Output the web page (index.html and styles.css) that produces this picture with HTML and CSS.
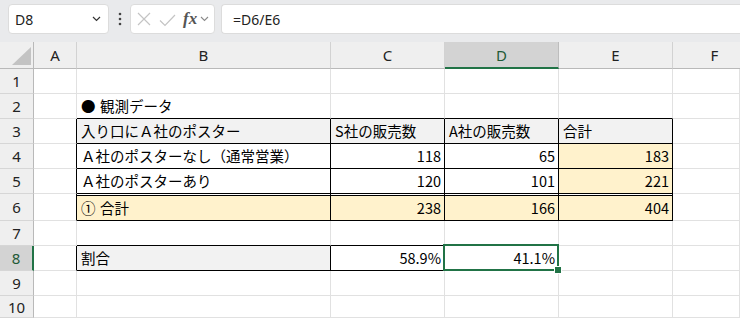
FILE: index.html
```html
<!DOCTYPE html>
<html lang="ja">
<head>
<meta charset="utf-8">
<link rel="stylesheet" href="styles.css">
</head>
<body>
<div class="toolbar">
  <div class="namebox">
    <span class="nb-text">D8</span>
    <svg class="chev" width="9" height="6" viewBox="0 0 9 6"><polyline points="1,1 4.5,4.5 8,1" fill="none" stroke="#333" stroke-width="1.2"/></svg>
  </div>
  <div class="dots">
    <svg width="4" height="14" viewBox="0 0 4 14"><circle cx="2" cy="2" r="1.3" fill="#444"/><circle cx="2" cy="7" r="1.3" fill="#444"/><circle cx="2" cy="12" r="1.3" fill="#444"/></svg>
  </div>
  <div class="fxbox">
    <svg class="ic-x" width="14" height="14" viewBox="0 0 14 14"><path d="M1 1 L13 13 M13 1 L1 13" stroke="#c4c4c4" stroke-width="1.2" fill="none"/></svg>
    <svg class="ic-ok" width="17" height="13" viewBox="0 0 17 13"><polyline points="1,6.5 6,11.5 16,1" fill="none" stroke="#c4c4c4" stroke-width="1.2"/></svg>
    <span class="fx">fx</span>
    <svg class="chev2" width="9" height="6" viewBox="0 0 9 6"><polyline points="1,1 4.5,4.5 8,1" fill="none" stroke="#8a8a8a" stroke-width="1.1"/></svg>
  </div>
  <div class="formula">=D6/E6</div>
</div>

<div class="sheet">
  <!-- column header -->
  <div class="corner"><svg width="19" height="18" viewBox="0 0 19 18"><polygon points="19,0 19,18 0,18" fill="#c3c3c3"/></svg></div>
  <div class="ch">A</div><div class="ch">B</div><div class="ch">C</div><div class="ch ch-sel">D</div><div class="ch">E</div><div class="ch ch-last">F</div>

  <!-- 1 -->
  <div class="rh">1</div><div class="c"></div><div class="c"></div><div class="c"></div><div class="c"></div><div class="c"></div><div class="c"></div>
  <!-- 2 -->
  <div class="rh">2</div><div class="c"></div><div class="c bb"><span class="bullet">●</span>観測データ</div><div class="c bb"></div><div class="c bb"></div><div class="c bb"></div><div class="c"></div>
  <!-- 3 -->
  <div class="rh">3</div><div class="c br"></div>
  <div class="c br bb hd">入り口にＡ社のポスター</div>
  <div class="c br bb hd">S社の販売数</div>
  <div class="c br bb hd">A社の販売数</div>
  <div class="c br bb hd">合計</div>
  <div class="c"></div>
  <!-- 4 -->
  <div class="rh">4</div><div class="c br"></div>
  <div class="c br bb">Ａ社のポスターなし（通常営業）</div>
  <div class="c br bb num">118</div>
  <div class="c br bb num">65</div>
  <div class="c br bb num y">183</div>
  <div class="c"></div>
  <!-- 5 -->
  <div class="rh">5</div><div class="c br"></div>
  <div class="c br bb">Ａ社のポスターあり</div>
  <div class="c br bb num">120</div>
  <div class="c br bb num">101</div>
  <div class="c br bb num y">221</div>
  <div class="c"></div>
  <!-- 6 -->
  <div class="rh">6</div><div class="c br"></div>
  <div class="c br bb y dbl"><span class="bullet">①</span>合計</div>
  <div class="c br bb num y dbl">238</div>
  <div class="c br bb num y dbl">166</div>
  <div class="c br bb num y dbl">404</div>
  <div class="c"></div>
  <!-- 7 -->
  <div class="rh">7</div><div class="c"></div><div class="c bb"></div><div class="c bb"></div><div class="c"></div><div class="c"></div><div class="c"></div>
  <!-- 8 -->
  <div class="rh rh-sel">8</div><div class="c br"></div>
  <div class="c br bb hd">割合</div>
  <div class="c br bb num">58.9%</div>
  <div class="c num active">41.1%<span class="selbox"><span class="handle"></span></span></div>
  <div class="c"></div><div class="c"></div>
  <!-- 9 -->
  <div class="rh">9</div><div class="c"></div><div class="c"></div><div class="c"></div><div class="c"></div><div class="c"></div><div class="c"></div>
  <!-- 10 -->
  <div class="rh">10</div><div class="c"></div><div class="c"></div><div class="c"></div><div class="c"></div><div class="c"></div><div class="c"></div>
</div>
</body>
</html>
```

FILE: styles.css
```css
html, body {
  margin: 0;
  padding: 0;
  background: #ffffff;
  overflow: hidden;
}
body {
  width: 740px;
  height: 318px;
  font-family: "Noto Sans CJK JP", "Noto Sans", sans-serif;
}

/* ---------- formula bar ---------- */
.toolbar {
  height: 42px;
  box-sizing: border-box;
  background: #e9eaec;
  display: flex;
  align-items: flex-start;
  padding: 4px 0 0 8px;
}
.namebox, .fxbox, .formula {
  height: 30px;
  box-sizing: border-box;
  background: #ffffff;
  border: 1px solid #dcdcdc;
  border-radius: 4px;
  display: flex;
  align-items: center;
}
.namebox {
  width: 101px;
  padding: 0 6px 0 6px;
  justify-content: space-between;
}
.nb-text {
  font-family: "Noto Sans", sans-serif;
  font-size: 14px;
  color: #222;
}
.chev { margin-right: 1px; }
.dots {
  width: 21px;
  height: 30px;
  display: flex;
  align-items: center;
  justify-content: center;
}
.fxbox {
  width: 85px;
}
.ic-x { margin-left: 6px; }
.ic-ok { margin-left: 8px; margin-top: 2px; }
.fx {
  margin-left: 7px;
  font-family: "Liberation Serif", "DejaVu Serif", serif;
  font-style: italic;
  font-weight: bold;
  font-size: 17px;
  color: #555;
  line-height: 1;
  margin-top: -2px;
}
.chev2 { margin-left: 3px; }
.formula {
  flex: 1;
  margin-left: 6px;
  border-right: none;
  border-radius: 4px 0 0 4px;
  padding-left: 11px;
  font-family: "Noto Sans", sans-serif;
  font-size: 14px;
  color: #222;
}

/* ---------- sheet ---------- */
.sheet {
  display: grid;
  width: 740px;
  height: 276px;
  overflow: hidden;
  grid-template-columns: 34px 43px 254px 114px 114px 114px 1fr;
  grid-template-rows: 27px 25px 25px 25px 25px 25px 27px 25px 25px 25px 1fr;
}
.sheet > div {
  box-sizing: border-box;
  display: flex;
  align-items: center;
  white-space: nowrap;
}
.corner {
  background: #efefef;
  border-right: 1px solid #b9b9b9;
  border-bottom: 1px solid #b9b9b9;
  justify-content: flex-end;
  align-items: flex-end !important;
  padding: 0 2px 3px 0;
}
.ch {
  background: #efefef;
  border-right: 1px solid #d2d2d2;
  border-bottom: 1px solid #b9b9b9;
  justify-content: center;
  font-family: "Noto Sans", sans-serif;
  font-size: 15px;
  color: #222;
}
.ch-last {
  padding-left: 16px;
  border-right: none;
}
.ch-sel {
  background: #d3d3d3;
  border-right-color: #bdbdbd;
  border-bottom: 2px solid #217346;
  color: #1f5a37;
}
.rh {
  background: #efefef;
  border-right: 1px solid #b9b9b9;
  border-bottom: 1px solid #d6d6d6;
  justify-content: center;
  font-family: "Noto Sans", sans-serif;
  font-size: 15px;
  color: #222;
}
.rh-sel {
  background: #d3d3d3;
  border-right: 2px solid #217346;
  color: #1f5a37;
}
.c {
  border-right: 1px solid #e1e1e1;
  border-bottom: 1px solid #e1e1e1;
  padding: 0 3px 2px 4px;
  font-size: 14.5px;
  color: #000;
  overflow: hidden;
}
.bullet {
  display: inline-block;
  width: 19px;
}
.num { justify-content: flex-end; }
.br { border-right-color: #000 !important; }
.bb { border-bottom-color: #000 !important; }
.hd { background: #f2f2f2; }
.y { background: #fff2cc; }
.dbl {
  box-shadow: inset 0 1px 0 #ffffff, inset 0 2px 0 #000000;
  padding-top: 2px;
}
.active {
  position: relative;
  overflow: visible !important;
}
.selbox {
  position: absolute;
  left: -2px;
  top: -2px;
  right: -1px;
  bottom: -1px;
  border: 2px solid #217346;
  z-index: 2;
}
.handle {
  position: absolute;
  right: -5px;
  bottom: -5px;
  width: 6px;
  height: 6px;
  background: #217346;
  border: 1px solid #ffffff;
}
```
